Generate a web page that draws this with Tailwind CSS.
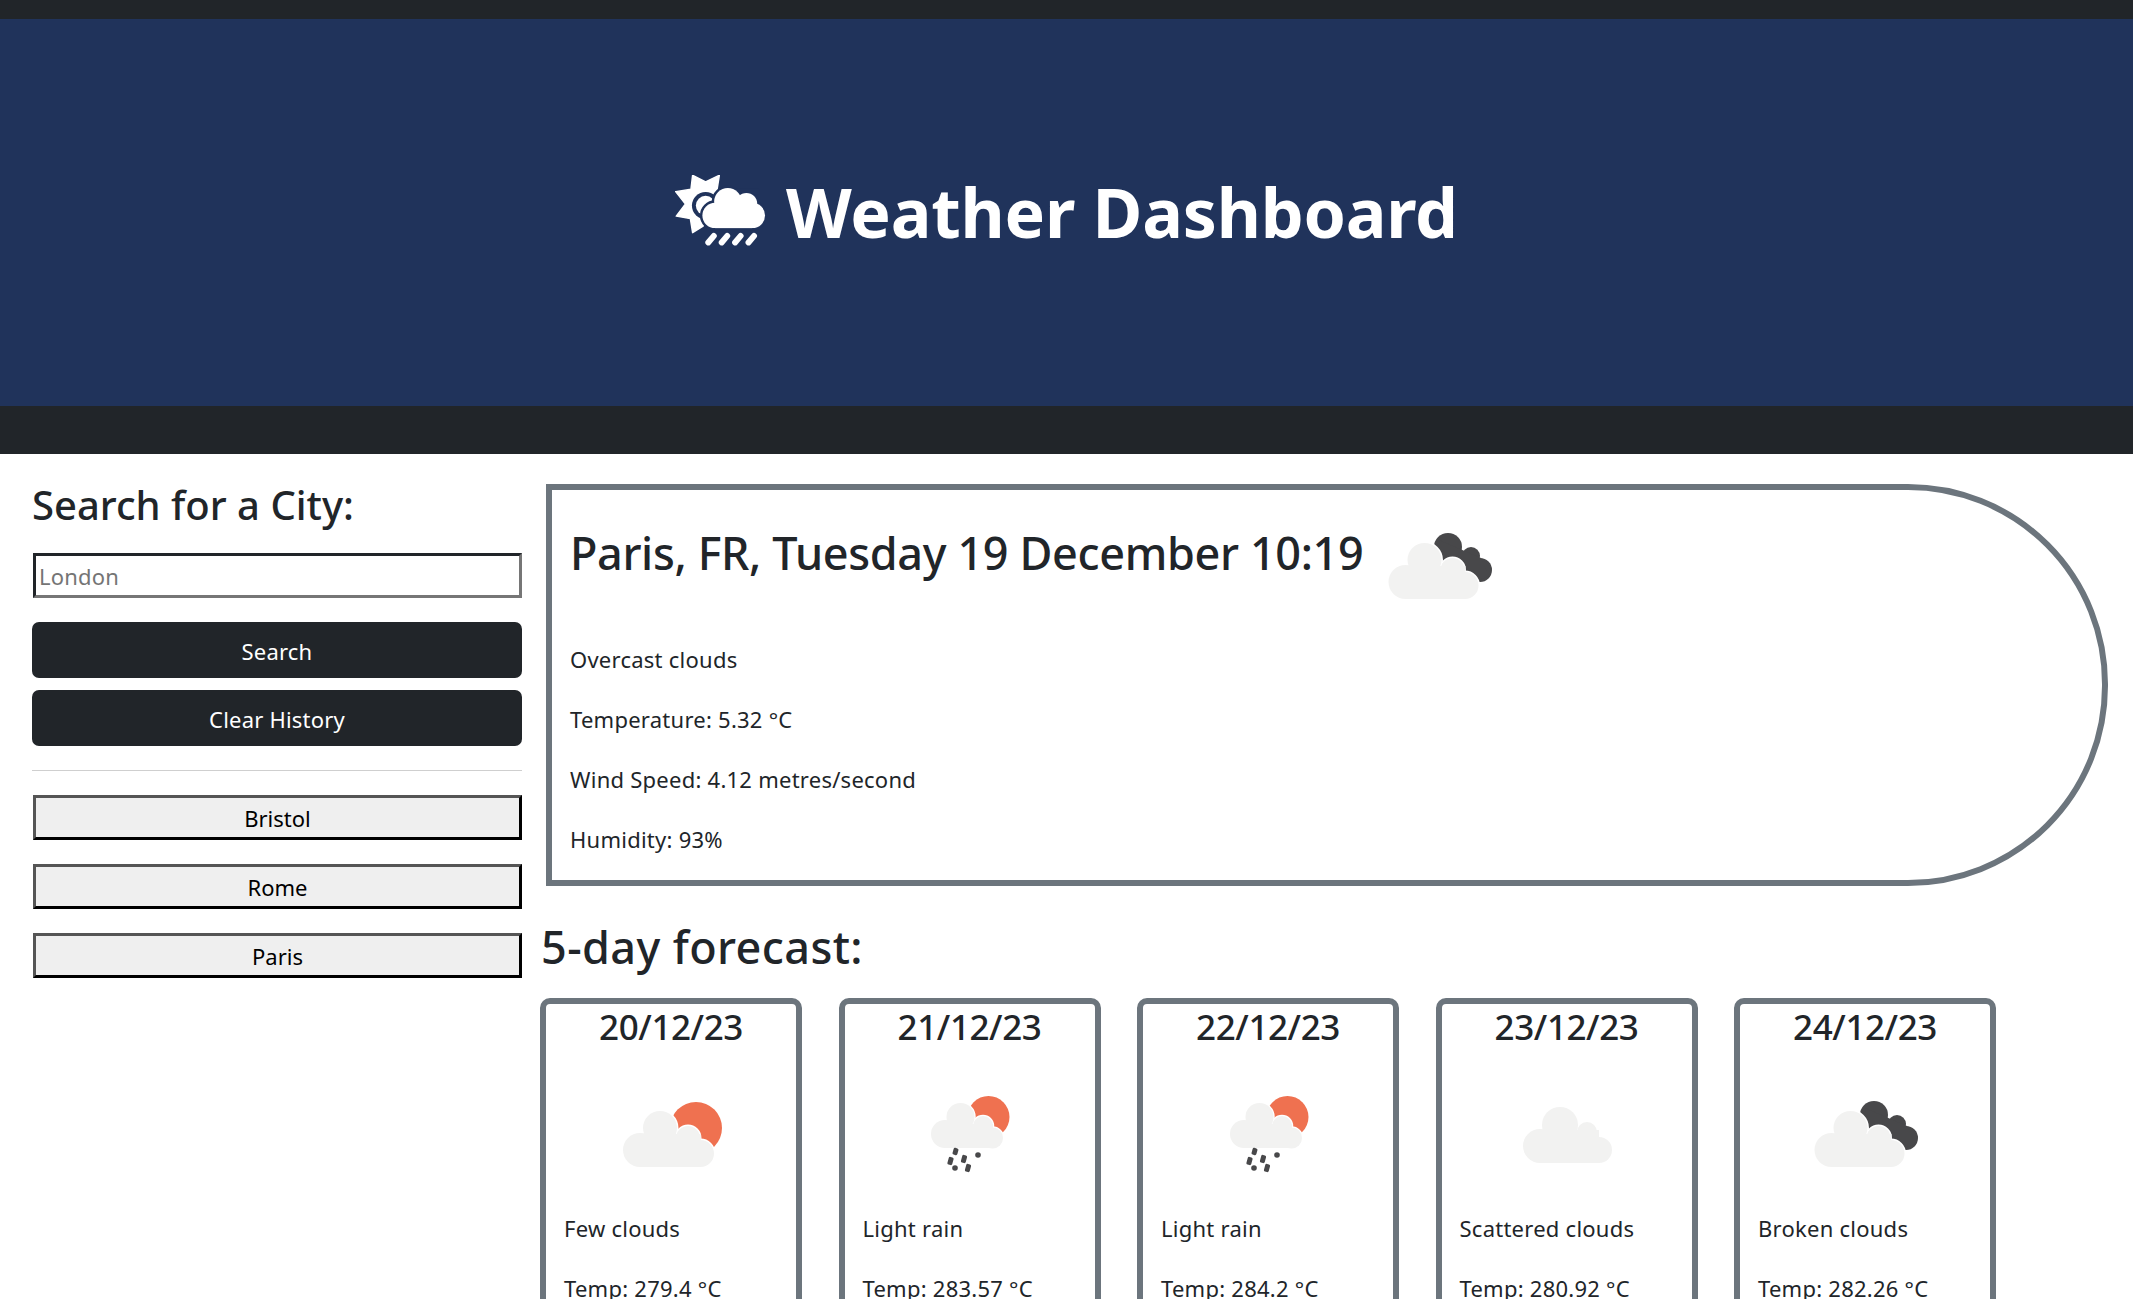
<!DOCTYPE html>
<html lang="en">
<head>
	<meta charset="UTF-8">
	<title>Weather Dashboard</title>
	<script src="https://cdn.jsdelivr.net/npm/@tailwindcss/browser@4"></script>
</head>
<body class="h-[1299px] overflow-hidden bg-white text-[#212529] font-['Noto_Sans',sans-serif]">
	<div class="h-[19px] bg-[#212529]"></div>
	<header class="h-[387px] bg-[#20335b] flex justify-center items-center text-white">
		<svg class="w-[91px] h-[72px] mr-[20px] mt-[-4px]" viewBox="-1 0 93 73">
			<path fill="#fff" d="M17 0 L30.3 6.7 L44.3 0 L42 14.3 L45 30 L27.7 52 L17 58.7 L14.7 44.3 L0.3 41.7 L9.7 29.3 L-0.3 16.7 L15.3 14.3Z" stroke="#fff" stroke-width="1.5" stroke-linejoin="round"/>
			<circle cx="30.3" cy="31" r="14" fill="#20335b"/>
			<circle cx="30.3" cy="31" r="10" fill="#fff"/>
			<g fill="#20335b" stroke="#20335b" stroke-width="5"><circle cx="40" cy="41" r="13"/><circle cx="53" cy="27" r="14"/><circle cx="72" cy="29" r="11"/><circle cx="78" cy="41" r="13"/></g>
			<rect x="45" y="14" width="40" height="6" fill="#20335b"/>
			<g fill="#fff"><circle cx="40" cy="41" r="13"/><circle cx="53" cy="27" r="14"/><circle cx="72" cy="29" r="11"/><circle cx="78" cy="41" r="13"/><rect x="40" y="28" width="38" height="26"/></g>
			<g stroke="#fff" stroke-width="6" stroke-linecap="round"><path d="M38.7 62 L33 68.7"/><path d="M52.4 62 L46.7 68.7"/><path d="M66.1 62 L60.4 68.7"/><path d="M79.8 62 L74.1 68.7"/></g>
		</svg>
		<h1 class="text-[68px] font-bold leading-none tracking-[-0.2px] mt-[-2px]">Weather Dashboard</h1>
	</header>
	<div class="h-[48px] bg-[#212529]"></div>

	<main class="flex">
		<aside class="w-[490px] ml-[32px] flex-none pt-[27px]">
			<h3 class="text-[40px] leading-[48px] font-medium">Search for a City:</h3>
			<input class="block w-[489px] h-[45px] ml-px mt-[24px] px-[3px] text-[22px] tracking-[0.2px] bg-white border-[3px] border-t-[#212529] border-l-[#212529] border-r-[#767676] border-b-[#767676] placeholder:text-[#757575]" placeholder="London">
			<button class="block w-full h-[56px] mt-[24px] pt-[3px] rounded-[7px] bg-[#212529] text-white text-[22px] tracking-[0.2px]">Search</button>
			<button class="block w-full h-[56px] mt-[12px] pt-[3px] rounded-[7px] bg-[#212529] text-white text-[22px] tracking-[0.2px]">Clear History</button>
			<hr class="mt-[24px] border-[#cfcfcf]">
			<div class="mt-[24px] ml-px flex flex-col gap-[24px]">
				<button class="h-[45px] pt-[2px] bg-[#efefef] text-black text-[22px] border-[3px] border-t-[#555] border-l-[#555] border-r-black border-b-black">Bristol</button>
				<button class="h-[45px] pt-[2px] bg-[#efefef] text-black text-[22px] border-[3px] border-t-[#555] border-l-[#555] border-r-black border-b-black">Rome</button>
				<button class="h-[45px] pt-[2px] bg-[#efefef] text-black text-[22px] border-[3px] border-t-[#555] border-l-[#555] border-r-black border-b-black">Paris</button>
			</div>
		</aside>

		<section class="ml-[18px] flex-1 pt-[30px] pr-[25px]">
			<div class="ml-[6px] h-[402px] border-[6px] border-[#6c757d] rounded-r-[200px] pl-[18px] pt-[10px]">
				<div class="flex items-start">
					<h2 class="text-[45px] leading-[56px] mt-[25px] font-medium tracking-[-0.37px] w-[803px] flex-none">Paris, FR, Tuesday 19 December 10:19</h2>
					<svg class="w-[133px] h-[133px] flex-none" viewBox="0 0 133 133">
						<g fill="#48484a"><circle cx="75" cy="47" r="14"/><circle cx="98" cy="56" r="9"/><circle cx="107" cy="70" r="12"/><path d="M66 40 L108 58 L116 76 L96 84 L70 70Z"/></g>
						<g fill="#fff" stroke="#fff" stroke-width="3"><circle cx="32.5" cy="82" r="17"/><circle cx="51.5" cy="60" r="17"/><circle cx="79.5" cy="70" r="12"/><circle cx="92" cy="85.5" r="13.5"/></g>
						<g fill="#f2f2f1"><circle cx="32.5" cy="82" r="17"/><circle cx="51.5" cy="60" r="17"/><circle cx="79.5" cy="70" r="12"/><circle cx="92" cy="85.5" r="13.5"/><rect x="32.5" y="66" width="60" height="33"/></g>
					</svg>
				</div>
				<div class="text-[22px] leading-[32px] tracking-[0.25px] mt-[10px] flex flex-col gap-[28px]">
					<p>Overcast clouds</p>
					<p>Temperature: 5.32 °C</p>
					<p>Wind Speed: 4.12 metres/second</p>
					<p>Humidity: 93%</p>
				</div>
			</div>

			<h2 class="text-[45px] leading-[50px] mt-[36px] ml-px font-medium tracking-[0.4px]">5-day forecast:</h2>

			<div class="flex gap-[36.5px] mt-[26px]">
				<article class="w-[262px] flex-none border-[6px] border-[#6c757d] rounded-[10px] pb-[20px]">
					<h3 class="text-center text-[35px] leading-[46px] tracking-[-0.4px] font-medium">20/12/23</h3>
					<svg class="block mx-auto mt-[18px] w-[133px] h-[133px]" viewBox="0 0 133 133">
						<circle cx="91" cy="60" r="26" fill="#ef7150"/>
						<g fill="#fff" stroke="#fff" stroke-width="3"><circle cx="35" cy="82" r="17"/><circle cx="55" cy="60" r="17"/><circle cx="83" cy="70" r="12"/><circle cx="95.5" cy="85.5" r="13.5"/></g>
						<g fill="#f2f2f1"><circle cx="35" cy="82" r="17"/><circle cx="55" cy="60" r="17"/><circle cx="83" cy="70" r="12"/><circle cx="95.5" cy="85.5" r="13.5"/><rect x="35" y="66" width="61" height="33"/></g>
					</svg>
					<div class="px-[18px] mt-[11px] text-[22px] leading-[32px] tracking-[0.25px] flex flex-col gap-[28px]">
						<p>Few clouds</p>
						<p>Temp: 279.4 °C</p>
					</div>
				</article>
				<article class="w-[262px] flex-none border-[6px] border-[#6c757d] rounded-[10px] pb-[20px]">
					<h3 class="text-center text-[35px] leading-[46px] tracking-[-0.4px] font-medium">21/12/23</h3>
					<svg class="block mx-auto mt-[18px] w-[133px] h-[133px]" viewBox="0 0 133 133">
						<circle cx="85.5" cy="49" r="21" fill="#ef7150"/>
						<g fill="#fff" stroke="#fff" stroke-width="2.5"><circle cx="42" cy="66" r="14"/><circle cx="57.5" cy="49" r="14"/><circle cx="80" cy="58" r="10"/><circle cx="89.5" cy="70" r="10.5"/></g>
						<g fill="#f2f2f1"><circle cx="42" cy="66" r="14"/><circle cx="57.5" cy="49" r="14"/><circle cx="80" cy="58" r="10"/><circle cx="89.5" cy="70" r="10.5"/><rect x="42" y="56" width="48" height="24"/></g>
						<g fill="#48484a"><rect x="50" y="80" width="5" height="7" rx="1.5" transform="rotate(15 52.5 83.5)"/><rect x="45" y="89" width="5" height="8" rx="1.5" transform="rotate(15 47.5 93)"/><rect x="58.5" y="87" width="5" height="8" rx="1.5" transform="rotate(15 61 91)"/><circle cx="75" cy="87" r="2.8"/><circle cx="52" cy="100" r="2.8"/><rect x="62.5" y="96" width="5" height="8" rx="1.5" transform="rotate(15 65 100)"/></g>
					</svg>
					<div class="px-[18px] mt-[11px] text-[22px] leading-[32px] tracking-[0.25px] flex flex-col gap-[28px]">
						<p>Light rain</p>
						<p>Temp: 283.57 °C</p>
					</div>
				</article>
				<article class="w-[262px] flex-none border-[6px] border-[#6c757d] rounded-[10px] pb-[20px]">
					<h3 class="text-center text-[35px] leading-[46px] tracking-[-0.4px] font-medium">22/12/23</h3>
					<svg class="block mx-auto mt-[18px] w-[133px] h-[133px]" viewBox="0 0 133 133">
						<circle cx="85.5" cy="49" r="21" fill="#ef7150"/>
						<g fill="#fff" stroke="#fff" stroke-width="2.5"><circle cx="42" cy="66" r="14"/><circle cx="57.5" cy="49" r="14"/><circle cx="80" cy="58" r="10"/><circle cx="89.5" cy="70" r="10.5"/></g>
						<g fill="#f2f2f1"><circle cx="42" cy="66" r="14"/><circle cx="57.5" cy="49" r="14"/><circle cx="80" cy="58" r="10"/><circle cx="89.5" cy="70" r="10.5"/><rect x="42" y="56" width="48" height="24"/></g>
						<g fill="#48484a"><rect x="50" y="80" width="5" height="7" rx="1.5" transform="rotate(15 52.5 83.5)"/><rect x="45" y="89" width="5" height="8" rx="1.5" transform="rotate(15 47.5 93)"/><rect x="58.5" y="87" width="5" height="8" rx="1.5" transform="rotate(15 61 91)"/><circle cx="75" cy="87" r="2.8"/><circle cx="52" cy="100" r="2.8"/><rect x="62.5" y="96" width="5" height="8" rx="1.5" transform="rotate(15 65 100)"/></g>
					</svg>
					<div class="px-[18px] mt-[11px] text-[22px] leading-[32px] tracking-[0.25px] flex flex-col gap-[28px]">
						<p>Light rain</p>
						<p>Temp: 284.2 °C</p>
					</div>
				</article>
				<article class="w-[262px] flex-none border-[6px] border-[#6c757d] rounded-[10px] pb-[20px]">
					<h3 class="text-center text-[35px] leading-[46px] tracking-[-0.4px] font-medium">23/12/23</h3>
					<svg class="block mx-auto mt-[18px] w-[133px] h-[133px]" viewBox="0 0 133 133">
						<g fill="#f2f2f1"><circle cx="40" cy="78" r="17"/><circle cx="60" cy="57" r="18"/><circle cx="87" cy="64" r="10"/><circle cx="99" cy="82" r="13"/><rect x="40" y="62" width="59" height="33"/></g>
					</svg>
					<div class="px-[18px] mt-[11px] text-[22px] leading-[32px] tracking-[0.25px] flex flex-col gap-[28px]">
						<p>Scattered clouds</p>
						<p>Temp: 280.92 °C</p>
					</div>
				</article>
				<article class="w-[262px] flex-none border-[6px] border-[#6c757d] rounded-[10px] pb-[20px]">
					<h3 class="text-center text-[35px] leading-[46px] tracking-[-0.4px] font-medium">24/12/23</h3>
					<svg class="block mx-auto mt-[18px] w-[133px] h-[133px]" viewBox="0 0 133 133">
						<g fill="#48484a"><circle cx="75" cy="47" r="14"/><circle cx="98" cy="56" r="9"/><circle cx="107" cy="70" r="12"/><path d="M66 40 L108 58 L116 76 L96 84 L70 70Z"/></g>
						<g fill="#fff" stroke="#fff" stroke-width="3"><circle cx="32.5" cy="82" r="17"/><circle cx="51.5" cy="60" r="17"/><circle cx="79.5" cy="70" r="12"/><circle cx="92" cy="85.5" r="13.5"/></g>
						<g fill="#f2f2f1"><circle cx="32.5" cy="82" r="17"/><circle cx="51.5" cy="60" r="17"/><circle cx="79.5" cy="70" r="12"/><circle cx="92" cy="85.5" r="13.5"/><rect x="32.5" y="66" width="60" height="33"/></g>
					</svg>
					<div class="px-[18px] mt-[11px] text-[22px] leading-[32px] tracking-[0.25px] flex flex-col gap-[28px]">
						<p>Broken clouds</p>
						<p>Temp: 282.26 °C</p>
					</div>
				</article>
			</div>
		</section>
	</main>
</body>
</html>
